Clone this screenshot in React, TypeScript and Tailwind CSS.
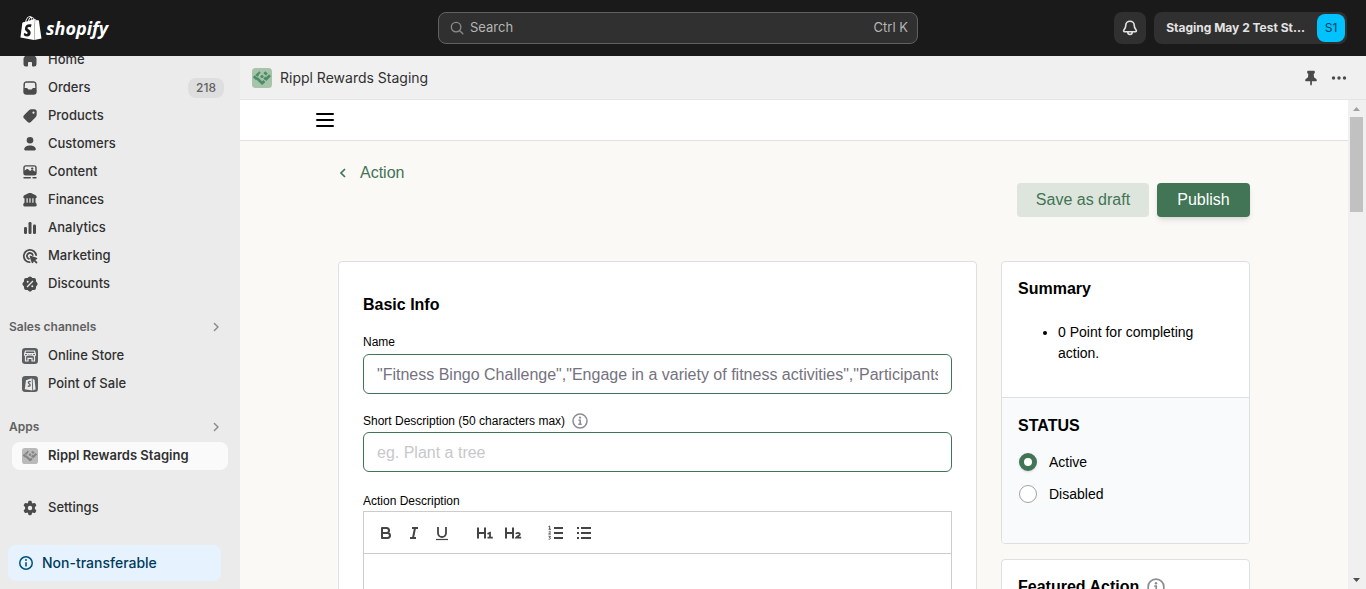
import React from "react";
import { SiShopify } from "react-icons/si";

type IconProps = { children: React.ReactNode; className?: string };
function Icon({ children, className = "size-5" }: IconProps) {
  return (
    <svg viewBox="0 0 20 20" className={`${className} shrink-0`} fill="currentColor" aria-hidden="true">
      {children}
    </svg>
  );
}

const HomeIcon = () => (
  <Icon>
    <path d="M8.300 3.200a2.600 2.600 0 0 1 3.400 0l3.900 3.500c.5.500.9 1.200.9 2v5.500a2.300 2.300 0 0 1-2.300 2.300h-1.400a.8.8 0 0 1-.8-.8v-2.900a.8.8 0 0 0-.8-.8H8.800a.8.8 0 0 0-.8.8v2.900a.8.8 0 0 1-.8.8H5.800a2.300 2.300 0 0 1-2.300-2.300V8.700c0-.8.4-1.500.9-2z" />
  </Icon>
);
const OrdersIcon = () => (
  <Icon>
    <path fillRule="evenodd" d="M6.300 3.300A2.900 2.900 0 0 0 3.500 5.800L3.300 13.500a3.200 3.200 0 0 0 3.200 3.200h7a3.200 3.200 0 0 0 3.200-3.200l-.2-7.700a2.900 2.900 0 0 0-2.800-2.500zm0 1.500h7.400c.7 0 1.300.5 1.300 1.200l.3 4h-1.900c-.5 0-1 .3-1.200.7l-.4.6a.5.5 0 0 1-.4.2h-2.800a.5.5 0 0 1-.4-.2l-.4-.6a1.400 1.400 0 0 0-1.200-.7H4.700L5 6c0-.7.6-1.200 1.300-1.200z" />
  </Icon>
);
const ProductsIcon = () => (
  <Icon>
    <path fillRule="evenodd" d="M11.600 3.300h2.900c1.200 0 2.200 1 2.200 2.200v2.900c0 1.100-.4 2.100-1.100 2.900l-4.500 4.500a2.600 2.600 0 0 1-3.700 0l-3.200-3.200a2.600 2.600 0 0 1 0-3.700l4.500-4.500a4.100 4.100 0 0 1 2.900-1.100zM13.500 7.800a1.100 1.100 0 1 0 0-2.200 1.100 1.100 0 0 0 0 2.200z" />
  </Icon>
);
const CustomersIcon = () => (
  <Icon>
    <circle cx="10" cy="6.300" r="3.300" />
    <path d="M4.200 15.200c0-2.300 2.800-3.700 5.800-3.700s5.800 1.400 5.800 3.700c0 .7-.5 1.200-1.200 1.200H5.400c-.7 0-1.200-.5-1.200-1.200z" />
  </Icon>
);
const ContentIcon = () => (
  <Icon>
    <path fillRule="evenodd" d="M3.300 5.700A2.500 2.500 0 0 1 5.800 3.200h8.400a2.500 2.500 0 0 1 2.500 2.500V11a2.500 2.500 0 0 1-2.500 2.500H5.800A2.500 2.500 0 0 1 3.300 11zM5.800 4.600c-.6 0-1.100.5-1.100 1.100v3.100l1.700-1.500c.5-.4 1.200-.4 1.700 0l2 1.800 1-.8c.6-.5 1.400-.5 2 0l2.200 1.500V5.700c0-.6-.5-1.100-1.100-1.100z" />
    <circle cx="12.200" cy="6.600" r="1.200" />
    <rect x="3.300" y="15" width="7.700" height="1.600" rx=".75" />
    <rect x="12.300" y="15" width="4.400" height="1.600" rx=".75" />
  </Icon>
);
const FinancesIcon = () => (
  <Icon>
    <path d="M9 3.100c.6-.3 1.400-.3 2 0l4.700 2.200c.6.300 1 .9 1 1.600 0 .8-.6 1.400-1.400 1.400H4.700c-.8 0-1.400-.6-1.400-1.400 0-.7.4-1.300 1-1.600z" />
    <path d="M4.500 8h2v5h-2zM7.700 8h1.700v5H7.700zM10.600 8h1.700v5h-1.700zM13.500 8h2v5h-2z" />
    <path d="M4.300 12.700h11.400c.5 0 1 .9 1 2.600 0 .7-.5 1.200-1.200 1.200H4.500c-.7 0-1.200-.5-1.200-1.200 0-1.700.5-2.600 1-2.600z" />
  </Icon>
);
const AnalyticsIcon = () => (
  <Icon>
    <rect x="4" y="9" width="3" height="7" rx="1.200" />
    <rect x="8.500" y="4" width="3" height="12" rx="1.200" />
    <rect x="13" y="6.500" width="3" height="9.500" rx="1.200" />
  </Icon>
);
const MarketingIcon = () => (
  <Icon>
    <g fill="none" stroke="currentColor" strokeWidth="1.800" strokeLinecap="round">
      <path d="M16.100 9.200A6.200 6.200 0 1 0 9.600 16.200" />
      <path d="M12.800 9A3 3 0 1 0 8.900 12.800" />
    </g>
    <path d="M9.700 10.700c-.2-.6.4-1.200 1-1l6 2.100c.7.300.7 1.200 0 1.500l-1.500.7 2 2a.8.8 0 0 1 0 1.100l-.2.2a.8.8 0 0 1-1.100 0l-2-2-.7 1.500c-.3.700-1.200.6-1.500 0z" />
  </Icon>
);
const DiscountsIcon = () => (
  <Icon>
    <path fillRule="evenodd" d="M8.600 3.100a2 2 0 0 1 2.800 0l.9.900 1.300-.1A2.200 2.200 0 0 1 16 6.200v1.300l1 1.100a2 2 0 0 1 0 2.800l-1 1v1.300a2.200 2.200 0 0 1-2.400 2.300l-1.300-.1-.9 1a2 2 0 0 1-2.800 0l-1-1-1.300.1A2.200 2.200 0 0 1 4 13.800v-1.400l-1-1a2 2 0 0 1 0-2.800l1-1.100V6.200a2.200 2.200 0 0 1 2.300-2.300l1.300.1zM12.500 6.600l-5.900 5.800.9 1 5.900-5.900zM7.700 8.700a1 1 0 1 0 0-2 1 1 0 0 0 0 2zM12.300 13.300a1 1 0 1 0 0-2 1 1 0 0 0 0 2z" />
  </Icon>
);
const SettingsIcon = () => (
  <Icon>
    <path fillRule="evenodd" d="M8.200 3.900c.1-.7.600-1.100 1.200-1.100h1.200c.6 0 1.100.4 1.200 1.100l.2 1.100.8.500 1.100-.4c.6-.2 1.200 0 1.500.5l.7 1.100c.3.500.2 1.200-.3 1.600l-.9.700v2l.9.700c.5.400.6 1.100.3 1.600l-.7 1.100c-.3.500-.9.700-1.500.5l-1.100-.4-.8.500-.2 1.100c-.1.700-.6 1.100-1.200 1.100H9.400c-.6 0-1.100-.4-1.200-1.100L8 15l-.8-.5-1.100.4c-.6.2-1.200 0-1.500-.5l-.7-1.100c-.3-.5-.2-1.200.3-1.600l.9-.7V9l-.9-.7c-.5-.4-.6-1.100-.3-1.600l.7-1.100c.3-.5.9-.7 1.500-.5l1.100.4L8 5zM10 12.200a2.200 2.200 0 1 0 0-4.400 2.200 2.200 0 0 0 0 4.400z" />
  </Icon>
);
const StoreIcon = () => (
  <Icon>
    <rect x="2" y="2" width="16" height="16" rx="3.200" fill="#5c5f62" />
    <g fill="none" stroke="#ebebeb" strokeWidth="1.200">
      <path d="M5.500 5h9l1 3.200a1.500 1.500 0 0 1-3 .3 1.500 1.500 0 0 1-2.500 0 1.500 1.500 0 0 1-2.500 0 1.500 1.500 0 0 1-3-.3zM4.800 7.500h10.400M5.500 10v5H8v-2.700h4V15h2.500v-5" />
    </g>
  </Icon>
);
const PosIcon = () => (
  <Icon>
    <rect x="2" y="2" width="16" height="16" rx="3.200" fill="#5c5f62" />
    <path d="M6 6.200l5.700-2 .6 12.300-7.500-1.200z" fill="#ebebeb" />
    <path d="M12.600 4.500l2 1.500 1 9.200-2.400 1.200z" fill="#ebebeb" />
    <path d="M10.600 7.800c-1-.6-2.300-.2-2.200.9.100 1 1.700 1.100 1.700 2.300 0 1.200-1.300 1.500-2.300.8" fill="none" stroke="#5c5f62" strokeWidth="1.400" />
  </Icon>
);
function RipplIcon({ bg, fg, className }: { bg: string; fg: string; className: string }) {
  return (
    <svg viewBox="0 0 20 20" className={`${className} shrink-0`} aria-hidden="true">
      <rect width="20" height="20" rx="3.500" fill={bg} />
      <g stroke={fg} strokeWidth="2.700" fill="none">
        <path d="M1.800 8.300l3 2.800M5 10.300l6 5.700M10.200 15.200l2.200-2.200M13.300 12l4.700-4.700" />
        <path d="M4.300 6l1.900 1.900M6.300 4.300l1.500 1.300M12.300 4.300l2.500 2.300M12.300 9.500l1.900 1.800" />
      </g>
      <circle cx="10" cy="8.500" r="1.600" fill={fg} />
    </svg>
  );
}
const InfoIcon = ({ className }: { className: string }) => (
  <svg viewBox="0 0 16 16" className={`${className} shrink-0`} fill="none" stroke="currentColor" aria-hidden="true">
    <circle cx="8" cy="8" r="7" strokeWidth="1.500" />
    <path d="M6.500 7.200h1.700v4M6.300 11.300h3.500" strokeWidth="1.500" />
    <circle cx="8" cy="4.700" r="1.100" fill="currentColor" stroke="none" />
  </svg>
);
const Chevron = () => (
  <Icon className="size-4">
    <path d="M8 5.500l4.500 4.500L8 14.500" fill="none" stroke="#8a8a8a" strokeWidth="1.800" strokeLinecap="round" strokeLinejoin="round" />
  </Icon>
);

function NavItem({ icon, label, badge, active }: { icon: React.ReactNode; label: string; badge?: string; active?: boolean }) {
  return (
    <li>
      <a
        href="#"
        className={`flex h-7 items-center gap-2 rounded-lg pr-1 pl-2 text-[13px] text-[#303030] ${active ? "bg-[#fafafa] font-semibold" : "font-medium"}`}
      >
        <span className="flex size-5 items-center justify-center text-[#4a4a4a]">{icon}</span>
        <span className="flex-1">{label}</span>
        {badge && <span className="rounded-lg bg-[#dedede] px-2 text-xs leading-5 text-[#616161]">{badge}</span>}
      </a>
    </li>
  );
}

function SectionTitle({ label }: { label: string }) {
  return (
    <button type="button" className="flex h-7 w-full items-center justify-between pr-1 pb-0.5 pl-[9px] text-xs font-semibold text-[#616161]">
      {label}
      <Chevron />
    </button>
  );
}

function Header() {
  return (
    <header className="flex h-14 shrink-0 items-center justify-between bg-[#1a1a1a] pr-[19px] pl-[9px]">
      <div className="flex flex-1">
        <a href="#" aria-label="Shopify home" className="flex items-center gap-[3px] pl-[10px] text-white">
          <SiShopify className="size-6" />
          <span className="font-['Open_Sans',sans-serif] text-lg leading-6 font-bold italic">shopify</span>
        </a>
      </div>
      <label className="flex h-8 w-[480px] items-center gap-1 rounded-lg border border-[#616161] bg-[#303030] px-[9px] text-[13px] text-[#b5b5b5]">
        <Icon className="size-[18px]">
          <g fill="none" stroke="#8a8a8a" strokeWidth="1.500" strokeLinecap="round">
            <circle cx="9" cy="9" r="5.300" />
            <path d="M13 13l3.500 3.500" />
          </g>
        </Icon>
        <input type="search" placeholder="Search" className="min-w-0 flex-1 bg-transparent outline-none placeholder:text-[#b5b5b5]" />
        <span>Ctrl K</span>
      </label>
      <div className="flex flex-1 justify-end gap-2">
        <button type="button" aria-label="Notifications" className="flex size-8 items-center justify-center rounded-lg bg-[#303030] text-[#e3e3e3]">
          <Icon>
            <g fill="none" stroke="currentColor" strokeWidth="1.600" strokeLinejoin="round" strokeLinecap="round">
              <path d="M10 3.200a4.200 4.200 0 0 0-4.200 4.100c0 2.400-.8 3.300-1.900 4.700-.6.800-.2 1.800.8 1.800h10.600c1 0 1.400-1 .8-1.800-1.100-1.400-1.900-2.300-1.900-4.700A4.200 4.200 0 0 0 10 3.200z" />
              <path d="M7.800 14c0 1.500.8 2.500 2.200 2.500s2.200-1 2.200-2.500" />
            </g>
          </Icon>
        </button>
        <button type="button" className="flex h-8 items-center gap-3 rounded-lg bg-[#303030] pr-0.5 pl-3 text-xs font-bold text-[#e3e3e3]">
          Staging May 2 Test St...
          <span className="flex size-7 items-center justify-center rounded-lg bg-[#00c2ff] text-xs font-normal text-[#003d59]">S1</span>
        </button>
      </div>
    </header>
  );
}

function Sidebar() {
  return (
    <nav aria-label="Main" className="flex w-60 shrink-0 flex-col overflow-hidden bg-[#ebebeb]">
      <div className="-mt-[10px] pr-3">
        <ul className="pl-3">
          <NavItem icon={<HomeIcon />} label="Home" />
          <NavItem icon={<OrdersIcon />} label="Orders" badge="218" />
          <NavItem icon={<ProductsIcon />} label="Products" />
          <NavItem icon={<CustomersIcon />} label="Customers" />
          <NavItem icon={<ContentIcon />} label="Content" />
          <NavItem icon={<FinancesIcon />} label="Finances" />
          <NavItem icon={<AnalyticsIcon />} label="Analytics" />
          <NavItem icon={<MarketingIcon />} label="Marketing" />
          <NavItem icon={<DiscountsIcon />} label="Discounts" />
        </ul>
        <div className="mt-4">
          <SectionTitle label="Sales channels" />
          <ul className="pl-3">
            <NavItem icon={<StoreIcon />} label="Online Store" />
            <NavItem icon={<PosIcon />} label="Point of Sale" />
          </ul>
        </div>
        <div className="mt-4">
          <SectionTitle label="Apps" />
          <ul className="pl-3">
            <NavItem icon={<RipplIcon bg="#bababa" fg="#858585" className="size-4" />} label="Rippl Rewards Staging" active />
          </ul>
        </div>
        <ul className="mt-6 pl-3">
          <NavItem icon={<SettingsIcon />} label="Settings" />
        </ul>
      </div>
      <button type="button" className="mt-auto mr-[19px] mb-2 ml-2 flex h-9 items-center gap-2 rounded-lg bg-[#e6f3ff] px-[10px] text-sm font-medium text-[#00527c]">
        <Icon className="size-4">
          <circle cx="10" cy="10" r="7.800" fill="none" stroke="currentColor" strokeWidth="1.900" />
          <path d="M9 9h2v5.500H9z" />
          <circle cx="10" cy="6.300" r="1.200" />
        </Icon>
        <span className="text-[#003a5a]">Non-transferable</span>
      </button>
    </nav>
  );
}

function ToolButton({ label, children }: { label: string; children: React.ReactNode }) {
  return (
    <button type="button" aria-label={label} className="flex h-6 w-7 items-center justify-center text-[#444444]">
      <svg viewBox="0 0 18 18" className="size-[18px]" fill="none" stroke="currentColor" strokeWidth="2" aria-hidden="true">
        {children}
      </svg>
    </button>
  );
}

function Editor() {
  return (
    <div className="h-64 border border-[#cccccc]">
      <div className="flex h-[42px] items-center border-b border-[#cccccc] px-2">
        <ToolButton label="Bold">
          <path d="M5 4h4.500a2.500 2.500 0 0 1 0 5H5zM5 9h5.500a2.500 2.500 0 0 1 0 5H5z" strokeLinejoin="round" />
        </ToolButton>
        <ToolButton label="Italic">
          <path d="M7 4h6M5 14h6M8 14l2-10" />
        </ToolButton>
        <ToolButton label="Underline">
          <path d="M5 3v6a4 4 0 0 0 8 0V3" strokeWidth="1.800" />
          <path d="M3 15.500h12" strokeWidth="1.200" />
        </ToolButton>
        <span className="w-[15px]" />
        <ToolButton label="Heading 1">
          <path d="M2 3.500v11M9 3.500v11M2 9h7" />
          <path d="M11.500 9.800l2.500-1v5M11.500 13.700h5.300" strokeWidth="1.800" />
        </ToolButton>
        <ToolButton label="Heading 2">
          <path d="M2 3.500v11M9 3.500v11M2 9h7" />
          <path d="M11.900 9.900c.6-1.500 4-1.500 4 .3 0 1.500-2.700 1.900-3.700 3.500h5" strokeWidth="1.800" />
        </ToolButton>
        <span className="w-[15px]" />
        <ToolButton label="Numbered list">
          <path d="M7 4h9M7 9h9M7 14h9" />
          <path d="M1.500 2.500L2.700 2v3M1.500 5.300H4M1.700 7.800c1-.8 2-.3 1.700.5L1.600 10H4M1.600 12.300h1.900l-1 1.200c1.500 0 1.500 2-.9 1.700" strokeWidth=".9" />
        </ToolButton>
        <ToolButton label="Bulleted list">
          <path d="M6 4h10M6 9h10M6 14h10" />
          <path d="M2 4h2M2 9h2M2 14h2" />
        </ToolButton>
      </div>
      <div role="textbox" aria-label="Action Description" contentEditable suppressContentEditableWarning className="h-40 p-3 outline-none" />
    </div>
  );
}

function BasicInfo() {
  return (
    <section className="min-w-0 flex-1 rounded border border-[#dedfe1] bg-white px-6 pt-[31px] pb-6">
      <h2 className="text-base leading-6 font-bold">Basic Info</h2>
      <label htmlFor="name" className="mt-[15px] block text-xs leading-5">Name</label>
      <input
        id="name"
        type="text"
        placeholder={'"Fitness Bingo Challenge","Engage in a variety of fitness activities","Participants will complete a bingo card"'}
        className="mt-0.5 block h-10 w-full rounded-md border border-[#417555] bg-white px-[13px] pt-0.5 text-base outline-none placeholder:text-[#757280]"
      />
      <div className="mt-4 flex h-[22px] items-center gap-[7px]">
        <label htmlFor="short" className="text-xs leading-5">Short Description (50 characters max)</label>
        <InfoIcon className="size-4 text-[#8c8c96]" />
      </div>
      <input
        id="short"
        type="text"
        placeholder="eg. Plant a tree"
        className="block h-10 w-full rounded-md border border-[#417555] bg-white px-[13px] pt-0.5 text-base outline-none placeholder:text-[#c7c8cc]"
      />
      <p className="mt-[19px] text-xs leading-5">Action Description</p>
      <Editor />
    </section>
  );
}

function StatusOption({ label, checked }: { label: string; checked?: boolean }) {
  return (
    <label className="flex h-8 items-center gap-3 text-sm">
      <input
        type="radio"
        name="status"
        defaultChecked={checked}
        className="size-[18px] appearance-none rounded-full border border-[#a2a3a8] bg-white checked:border-[5px] checked:border-[#417555] checked:shadow"
      />
      {label}
    </label>
  );
}

function SideColumn() {
  return (
    <aside className="flex w-[249px] shrink-0 flex-col gap-[15px]">
      <div className="overflow-hidden rounded border border-[#dedfe1] bg-white">
        <section className="h-[136px] border-b border-[#dedfe1] px-4 pt-[15px]">
          <h2 className="text-base leading-6 font-bold">Summary</h2>
          <ul className="mt-[21px] list-disc pl-10 text-sm leading-[21px]">
            <li>0 Point for completing action.</li>
          </ul>
        </section>
        <section className="h-[145px] bg-[#f9fafc] px-4 pt-4">
          <h2 className="text-base leading-6 font-bold">STATUS</h2>
          <div className="mt-2 pl-px">
            <StatusOption label="Active" checked />
            <StatusOption label="Disabled" />
          </div>
        </section>
      </div>
      <section className="h-48 rounded border border-[#dedfe1] bg-white px-4 pt-[15px]">
        <h2 className="flex items-center gap-2 text-base leading-6 font-bold">
          Featured Action
          <InfoIcon className="size-[18px] text-[#8c8c96]" />
        </h2>
      </section>
    </aside>
  );
}

function AppFrame() {
  return (
    <div className="flex min-h-0 flex-1">
      <div className="flex min-w-0 flex-1 flex-col overflow-hidden bg-[#faf9f5] font-['Liberation_Sans',Arial,sans-serif] text-black">
        <div className="flex h-[41px] shrink-0 items-center border-b border-[#dfe0e2] bg-white px-[76px]">
          <button type="button" aria-label="Open menu" className="flex w-[18px] flex-col gap-1">
            <span className="h-0.5 rounded-full bg-black" />
            <span className="h-0.5 rounded-full bg-black" />
            <span className="h-0.5 rounded-full bg-black" />
          </button>
        </div>
        <div className="mx-auto w-full max-w-[912px] pt-5">
          <a href="#" className="flex w-fit items-center gap-3 text-base leading-6 text-[#417555]">
            <svg viewBox="0 0 10 10" className="size-[10px]" fill="none" stroke="currentColor" strokeWidth="1.700" aria-hidden="true">
              <path d="M7 1L3 5l4 4" />
            </svg>
            Action
          </a>
          <div className="-mt-[2px] flex justify-end gap-2">
            <button type="button" className="h-[34px] w-[132px] rounded bg-[#dde5dd] text-base text-[#417555]">Save as draft</button>
            <button type="button" className="h-[34px] w-[93px] rounded bg-[#417555] text-base text-white shadow-md">Publish</button>
          </div>
          <div className="mt-11 flex items-start gap-6">
            <BasicInfo />
            <SideColumn />
          </div>
        </div>
      </div>
      <div aria-hidden="true" className="flex w-[18px] shrink-0 flex-col items-center justify-between bg-[#f0f0f0] py-1 pr-[2px]">
        <div className="flex flex-col items-center gap-1">
          <svg viewBox="0 0 9 9" className="size-[9px]" fill="#a0a0a0"><path d="M1 7l3.500-4L8 7z" /></svg>
          <div className="h-[95px] w-[13px] bg-[#c1c1c1]" />
        </div>
        <svg viewBox="0 0 9 9" className="size-[9px]" fill="#4f4f4f"><path d="M1 2l3.500 4L8 2z" /></svg>
      </div>
    </div>
  );
}

export default function App() {
  return (
    <div className="flex h-screen flex-col overflow-hidden font-[Inter,sans-serif]">
      <Header />
      <div className="flex min-h-0 flex-1">
        <Sidebar />
        <main className="flex min-w-0 flex-1 flex-col">
          <div className="flex h-11 shrink-0 items-center justify-between border-b border-[#e5e5e5] bg-[#f0f0f0] pr-[17px] pl-3">
            <h1 className="flex items-center gap-2 text-sm text-[#303030]">
              <RipplIcon bg="#a7c4aa" fg="#4c8c66" className="size-5" />
              Rippl Rewards Staging
            </h1>
            <div className="flex items-center gap-2 text-[#4a4a4a]">
              <button type="button" aria-label="Pin app">
                <Icon>
                  <path d="M7 2.800h6c.5 0 .8.300.8.800v1.200c0 .5-.3.800-.8 1l-.3.300.3 3.100 2.200 1.800c.4.300.6.700.6 1.200 0 .6-.4 1-1 1h-3.900v3.300L10 17.800l-.8-1.300v-3.300H5.200c-.6 0-1-.4-1-1 0-.5.2-.9.6-1.200L7 9.200l.3-3.100L7 5.800c-.5-.2-.8-.5-.8-1V3.600c0-.5.3-.8.8-.8z" />
                </Icon>
              </button>
              <button type="button" aria-label="More actions">
                <Icon>
                  <circle cx="4.500" cy="10" r="1.700" />
                  <circle cx="10" cy="10" r="1.700" />
                  <circle cx="15.500" cy="10" r="1.700" />
                </Icon>
              </button>
            </div>
          </div>
          <AppFrame />
        </main>
      </div>
    </div>
  );
}
